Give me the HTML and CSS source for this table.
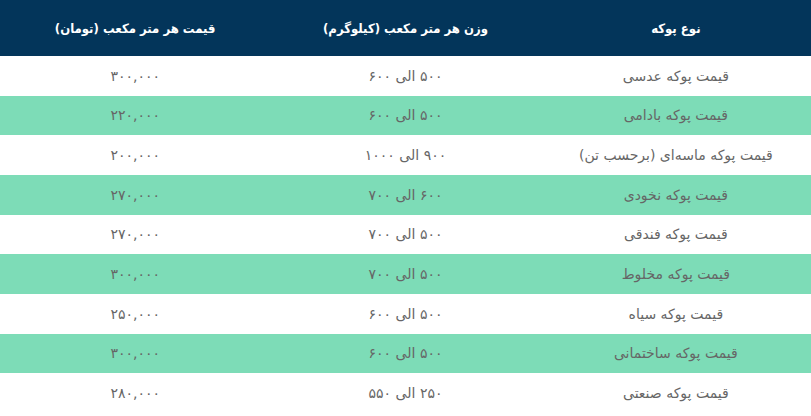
FILE: index.html
```
<!DOCTYPE html>
<html lang="fa" dir="rtl">
<head>
<meta charset="utf-8">
<link rel="stylesheet" href="styles.css">
</head>
<body>
<table class="price-table">
  <thead>
    <tr>
      <th>نوع پوکه</th>
      <th>وزن هر متر مکعب (کیلوگرم)</th>
      <th>قیمت هر متر مکعب (تومان)</th>
    </tr>
  </thead>
  <tbody>
    <tr><td>قیمت پوکه عدسی</td><td>۵۰۰ الی ۶۰۰</td><td>۳۰۰,۰۰۰</td></tr>
    <tr class="alt"><td>قیمت پوکه بادامی</td><td>۵۰۰ الی ۶۰۰</td><td>۲۲۰,۰۰۰</td></tr>
    <tr><td>قیمت پوکه ماسه‌ای (برحسب تن)</td><td>۹۰۰ الی ۱۰۰۰</td><td>۲۰۰,۰۰۰</td></tr>
    <tr class="alt"><td>قیمت پوکه نخودی</td><td>۶۰۰ الی ۷۰۰</td><td>۲۷۰,۰۰۰</td></tr>
    <tr><td>قیمت پوکه فندقی</td><td>۵۰۰ الی ۷۰۰</td><td>۲۷۰,۰۰۰</td></tr>
    <tr class="alt"><td>قیمت پوکه مخلوط</td><td>۵۰۰ الی ۷۰۰</td><td>۳۰۰,۰۰۰</td></tr>
    <tr><td>قیمت پوکه سیاه</td><td>۵۰۰ الی ۶۰۰</td><td>۲۵۰,۰۰۰</td></tr>
    <tr class="alt"><td>قیمت پوکه ساختمانی</td><td>۵۰۰ الی ۶۰۰</td><td>۳۰۰,۰۰۰</td></tr>
    <tr><td>قیمت پوکه صنعتی</td><td>۲۵۰ الی ۵۵۰</td><td>۲۸۰,۰۰۰</td></tr>
  </tbody>
</table>
</body>
</html>
```
FILE: styles.css
```
html, body {
  margin: 0;
  padding: 0;
  background: #ffffff;
}
body {
  font-family: "DejaVu Sans", sans-serif;
  direction: rtl;
}
.price-table {
  width: 811px;
  border-collapse: collapse;
  table-layout: fixed;
}
.price-table th {
  background: #03355a;
  color: #ffffff;
  font-family: "DejaVu Sans Condensed", "DejaVu Sans", sans-serif;
  font-weight: bold;
  font-size: 13px;
  height: 56px;
  padding: 0 8px;
  text-align: center;
  vertical-align: middle;
}
.price-table td {
  height: 39.67px;
  padding: 0 8px;
  color: #666666;
  font-size: 14px;
  text-align: center;
  vertical-align: middle;
}
.price-table tr.alt td {
  background: #7ddcb7;
}
```
